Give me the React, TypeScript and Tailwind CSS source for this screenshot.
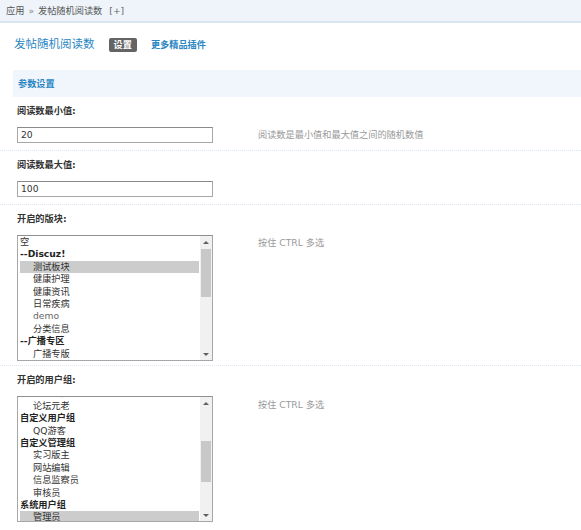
import React from "react";

type Item = { t: string; bold?: boolean; indent?: boolean; sel?: boolean; gray?: boolean };

const forums: Item[] = [
  { t: "空" },
  { t: "--Discuz!", bold: true },
  { t: "测试板块", indent: true, sel: true },
  { t: "健康护理", indent: true },
  { t: "健康资讯", indent: true },
  { t: "日常疾病", indent: true },
  { t: "demo", indent: true, gray: true },
  { t: "分类信息", indent: true },
  { t: "--广播专区", bold: true },
  { t: "广播专版", indent: true },
];

const groups: Item[] = [
  { t: "金牌会员", indent: true },
  { t: "论坛元老", indent: true },
  { t: "自定义用户组", bold: true },
  { t: "QQ游客", indent: true },
  { t: "自定义管理组", bold: true },
  { t: "实习版主", indent: true },
  { t: "网站编辑", indent: true },
  { t: "信息监察员", indent: true },
  { t: "审核员", indent: true },
  { t: "系统用户组", bold: true },
  { t: "管理员", indent: true, sel: true },
];

function ListBox({
  items,
  offsetClass,
  thumbTopClass,
  thumbHClass,
}: {
  items: Item[];
  offsetClass: string;
  thumbTopClass: string;
  thumbHClass: string;
}) {
  return (
    <div className="w-[196px] h-[126px] border border-[#a7a7a7] border-t-[#8f8f8f] bg-white flex">
      <div className="flex-1 overflow-hidden pl-[2px] pr-[1px]">
        <div className={offsetClass}>
          {items.map((it, i) => (
            <div
              key={i}
              className={
                "h-[12.4px] leading-[12.4px] whitespace-nowrap text-[9.2px] " +
                (it.indent ? "pl-[13px] " : "pl-0 ") +
                (it.bold ? "font-bold text-[#222] " : it.gray ? "text-[#666] " : "text-[#333] ") +
                (it.sel ? "bg-[#cccccc]" : "")
              }
            >
              {it.t}
            </div>
          ))}
        </div>
      </div>
      <div className="w-[12px] bg-[#f1f1f1] flex flex-col items-center">
        <div className="h-[12px] w-full flex items-center justify-center">
          <div className="w-0 h-0 border-l-[3px] border-r-[3px] border-b-[3px] border-l-transparent border-r-transparent border-b-[#606060]" />
        </div>
        <div className={thumbTopClass} />
        <div className={"w-[10px] bg-[#c8c8c8] " + thumbHClass} />
        <div className="flex-1" />
        <div className="h-[12px] w-full flex items-center justify-center">
          <div className="w-0 h-0 border-l-[3px] border-r-[3px] border-t-[3px] border-l-transparent border-r-transparent border-t-[#606060]" />
        </div>
      </div>
    </div>
  );
}

function Label({ children }: { children: React.ReactNode }) {
  return (
    <div className="h-[28px] flex items-center pl-[17px] text-[9.2px] font-bold text-[#333]">
      {children}
    </div>
  );
}

export default function App() {
  return (
    <div
      className="w-[581px] h-[530px] bg-white overflow-hidden text-[#333]"
      style={{ fontFamily: '"DejaVu Sans", "Noto Sans CJK SC", sans-serif' }}
    >
      {/* breadcrumb */}
      <div className="h-[23px] bg-[#eef4fa] border-b-2 border-[#d9e7f3] flex items-center pl-[6px] text-[9.2px] text-[#555]">
        <span>应用</span>
        <span className="mx-[4px] text-[#888]">»</span>
        <span>发帖随机阅读数</span>
        <span className="ml-[7px] text-[#666]">[+]</span>
      </div>

      {/* title row */}
      <div className="h-[47px] flex items-center pl-[14px] pb-[3px]">
        <span className="text-[11.5px] text-[#2a86c4]">发帖随机阅读数</span>
        <span className="ml-[14px] h-[14px] px-[5px] bg-[#646464] rounded-[2px] text-white text-[9.2px] font-bold flex items-center">
          设置
        </span>
        <span className="ml-[14px] text-[9.2px] font-bold text-[#2a86c4]">更多精品插件</span>
      </div>

      {/* section header */}
      <div className="ml-[13px] h-[27px] bg-[#f0f6fc] flex items-center pl-[5px] text-[9.2px] font-bold text-[#2a86c4]">
        参数设置
      </div>

      {/* min */}
      <Label>阅读数最小值:</Label>
      <div className="flex items-start pl-[17px] pt-[2px] pb-[7px] border-b border-dotted border-[#dbe6f0]">
        <div className="w-[196px] h-[16px] border border-[#a7a7a7] border-t-[#8a8a8a] flex items-center pl-[3px] text-[9.2px] text-[#333]">
          20
        </div>
        <div className="ml-[45px] h-[16px] flex items-center text-[9.2px] text-[#999]">
          阅读数是最小值和最大值之间的随机数值
        </div>
      </div>

      {/* max */}
      <Label>阅读数最大值:</Label>
      <div className="flex items-start pl-[17px] pt-[2px] pb-[7px] border-b border-dotted border-[#dbe6f0]">
        <div className="w-[196px] h-[16px] border border-[#a7a7a7] border-t-[#8a8a8a] flex items-center pl-[3px] text-[9.2px] text-[#333]">
          100
        </div>
      </div>

      {/* forums */}
      <Label>开启的版块:</Label>
      <div className="flex items-start pl-[17px] pt-[2px] pb-[4px] border-b border-dotted border-[#dbe6f0]">
        <ListBox
          items={forums}
          offsetClass="mt-0"
          thumbTopClass="h-[1px]"
          thumbHClass="h-[48px]"
        />
        <div className="ml-[45px] mt-[2px] text-[9.2px] text-[#999] leading-[12px]">按住 CTRL 多选</div>
      </div>

      {/* groups */}
      <Label>开启的用户组:</Label>
      <div className="flex items-start pl-[17px] pt-[2px]">
        <ListBox
          items={groups}
          offsetClass="-mt-[9.6px]"
          thumbTopClass="h-[32px]"
          thumbHClass="h-[41px]"
        />
        <div className="ml-[45px] mt-[3px] text-[9.2px] text-[#999] leading-[12px]">按住 CTRL 多选</div>
      </div>
    </div>
  );
}
